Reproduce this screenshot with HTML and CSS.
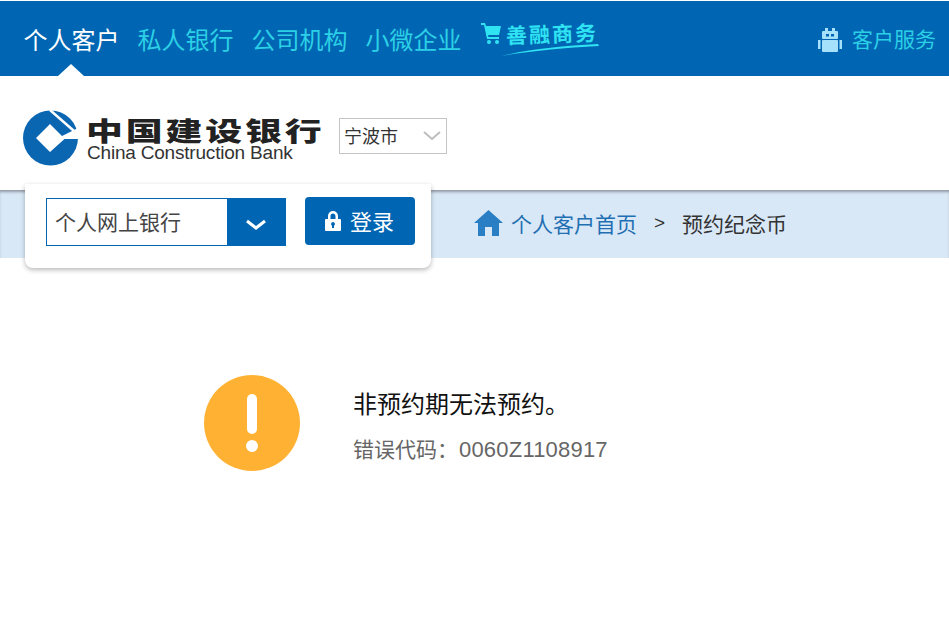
FILE: index.html
```html
<!DOCTYPE html>
<html lang="zh-CN">
<head>
<meta charset="utf-8">
<title>预约纪念币</title>
<link rel="stylesheet" href="styles.css">
</head>
<body>
<nav class="topnav">
  <a class="nav-item active">个人客户</a>
  <a class="nav-item">私人银行</a>
  <a class="nav-item">公司机构</a>
  <a class="nav-item">小微企业</a>
  <a class="shan">
    <svg class="cart" width="21" height="24" viewBox="0 0 21 24"><path d="M0 1h4l1 3h15l-2 9H7l.5 2H18v2H6L3 3H0z" fill="#2fe3f2"/><circle cx="8" cy="20" r="2" fill="#2fe3f2"/><circle cx="16" cy="20" r="2" fill="#2fe3f2"/></svg>
    <span class="shan-text">善融商务</span>
    <svg class="swoosh" width="98" height="14" viewBox="0 0 98 14"><path d="M0 13C30 6 60 3 97 1l1 2C60 5 30 8 0 13z" fill="#2fe3f2"/></svg>
  </a>
  <a class="service">
    <svg width="24" height="25" viewBox="0 0 24 25"><rect x="7" y="0" width="3" height="3" fill="#a6e1fb"/><rect x="14" y="0" width="3" height="3" fill="#a6e1fb"/><rect x="4" y="3" width="16" height="8" rx="1" fill="#a6e1fb"/><rect x="8" y="6" width="3" height="2.500" fill="#0066b3"/><rect x="13" y="6" width="3" height="2.500" fill="#0066b3"/><rect x="4" y="12" width="16" height="12" rx="1" fill="#a6e1fb"/><rect x="0" y="12" width="2.500" height="9" fill="#a6e1fb"/><rect x="21.500" y="12" width="2.500" height="9" fill="#a6e1fb"/></svg>
    <span>客户服务</span>
  </a>
</nav>

<header class="brand">
  <svg class="emblem" width="70" height="65" viewBox="15 105 70 65">
    <circle cx="50.500" cy="138" r="27.500" fill="#0b66b2"/>
    <path d="M50 124L62 136 74 130 82 126V139H64.500L50 152 36 138z" fill="#fff"/>
    <path d="M50 110L74 131" fill="none" stroke="#fff" stroke-width="2.500"/>
  </svg>
  <div class="wordmark">
    <div class="wm-cn">中国建设银行</div>
    <div class="wm-en">China Construction Bank</div>
  </div>
  <div class="city">
    <span>宁波市</span>
    <svg width="18" height="10" viewBox="0 0 18 10"><path d="M1 1l8 7 8-7" fill="none" stroke="#bdbdbd" stroke-width="2"/></svg>
  </div>
</header>

<section class="crumbs">
  <svg width="29" height="26" viewBox="0 0 29 26"><path d="M14.500 0L29 13h-4v13h-7v-9h-7v9H4V13H0z" fill="#2a7fc4"/></svg>
  <a class="crumb-link">个人客户首页</a>
  <span class="crumb-sep">&gt;</span>
  <span class="crumb-cur">预约纪念币</span>
</section>

<aside class="login">
  <div class="login-select">
    <span class="login-value">个人网上银行</span>
    <span class="login-arrow"><svg width="22" height="12" viewBox="0 0 22 12"><path d="M2 2l9 7 9-7" fill="none" stroke="#fff" stroke-width="3"/></svg></span>
  </div>
  <button class="login-btn">
    <svg width="18" height="21" viewBox="0 0 18 21"><path d="M4 9V6a5 5 0 0 1 10 0v3h-2.500V6a2.500 2.500 0 0 0-5 0v3z" fill="#fff"/><path fill-rule="evenodd" d="M2 9h14a1 1 0 0 1 1 1v10a1 1 0 0 1-1 1H2a1 1 0 0 1-1-1V10a1 1 0 0 1 1-1zm7 3a2 2 0 0 0-1 3.700V18h2v-2.300A2 2 0 0 0 9 12z" fill="#fff"/></svg>
    <span>登录</span>
  </button>
</aside>

<main class="message">
  <svg class="alert" width="96" height="96" viewBox="0 0 96 96"><circle cx="48" cy="48" r="48" fill="#ffb133"/><rect x="43" y="19" width="10" height="40" rx="5" fill="#fff"/><circle cx="48" cy="71" r="6" fill="#fff"/></svg>
  <div class="msg-text">
    <h1 class="msg-title">非预约期无法预约。</h1>
    <p class="msg-code">错误代码：<span class="msg-num">0060Z1108917</span></p>
  </div>
</main>
</body>
</html>
```

FILE: styles.css
```css
* { box-sizing: border-box; }
html, body { margin: 0; height: 100%; overflow: hidden; }
body {
  position: relative;
  padding-top: 1px;
  background: #fff;
  font-family: "Noto Sans CJK SC", "Liberation Sans", sans-serif;
  font-weight: 400;
}
.topnav {
  display: flex;
  align-items: flex-start;
  gap: 18px;
  height: 75px;
  padding: 0 13px 0 23.5px;
  background: #0066b3;
}
.nav-item {
  position: relative;
  height: 75px;
  padding-top: 21px;
  font-size: 24px;
  line-height: 34px;
  color: #2cd0e6;
}
.nav-item.active { color: #fff; }
.nav-item.active::after {
  content: "";
  position: absolute;
  left: 34.500px;
  bottom: 0;
  border: 13px solid transparent;
  border-top: 0;
  border-bottom: 12px solid #fff;
}
.shan {
  position: relative;
  display: flex;
  align-items: flex-start;
  gap: 4px;
  width: 118px;
  padding-top: 21px;
  margin-left: 1px;
  color: #2fe3f2;
}
.cart { flex: none; }
.shan-text {
  margin-top: -2px;
  font-size: 21px;
  line-height: 26px;
  font-weight: 700;
  letter-spacing: 2px;
  white-space: nowrap;
  transform: rotate(-2deg);
}
.swoosh { position: absolute; left: 20px; top: 42px; }
.service {
  display: flex;
  align-items: flex-start;
  gap: 10px;
  margin-left: auto;
  padding-top: 27px;
  font-size: 21px;
  line-height: 24px;
  color: #2cd0e6;
}
.service span { margin-top: -2px; }
.brand {
  display: flex;
  align-items: flex-start;
  height: 114px;
  padding: 29px 0 0 15px;
}
.emblem { flex: none; }
.wordmark { margin-left: 2px; width: 252px; padding-top: 12px; }
.wm-cn {
  margin-left: -1px;
  font-size: 26px;
  line-height: 26px;
  font-weight: 900;
  letter-spacing: 2px;
  color: #222;
  white-space: nowrap;
  transform: scaleX(1.42);
  transform-origin: left center;
}
.wm-en {
  font-family: "Liberation Sans", sans-serif;
  font-size: 19px;
  line-height: 20px;
  letter-spacing: -.2px;
  color: #333;
  white-space: nowrap;
}
.city {
  display: flex;
  flex: none;
  align-items: center;
  justify-content: space-between;
  width: 108px;
  height: 36px;
  margin-top: 13px;
  padding: 0 5px 0 4px;
  border: 1px solid #c4c4c4;
  font-size: 18px;
  color: #333;
}
.city span { margin-top: -2px; }
.crumbs {
  display: flex;
  align-items: center;
  height: 68px;
  padding: 0 0 2px 474px;
  background: #d9e8f7;
  box-shadow: inset 0 3px 3px -1px #8f98a3;
  font-size: 21px;
  line-height: 30px;
}
.crumb-link { margin-left: 8px; color: #1f6fb2; }
.crumb-sep { margin: 0 17px; color: #333; font-family: "Liberation Sans", sans-serif; font-size: 19px; }
.crumb-cur { color: #333; }
.login {
  position: absolute;
  left: 25px;
  top: 184px;
  display: flex;
  align-items: flex-start;
  gap: 19px;
  width: 406px;
  height: 84px;
  padding: 14px 0 0 21px;
  background: #fff;
  border-radius: 0 0 8px 8px;
  box-shadow: 0 2px 5px rgba(0, 0, 0, .28);
}
.login-select {
  display: flex;
  width: 240px;
  height: 48px;
  border: 1px solid #0066b3;
  background: #fff;
}
.login-value {
  flex: 1;
  padding-left: 8px;
  font-size: 21px;
  line-height: 44px;
  color: #444;
}
.login-arrow {
  display: flex;
  align-items: center;
  justify-content: center;
  width: 58px;
  padding-top: 6px;
  background: #0066b3;
}
.login-btn {
  display: flex;
  align-items: center;
  gap: 8px;
  width: 110px;
  height: 48px;
  margin-top: -1px;
  padding: 0 0 2px 19px;
  border: 0;
  border-radius: 4px;
  background: #0066b3;
  color: #fff;
  font: inherit;
  font-size: 22px;
}
.message {
  display: flex;
  align-items: flex-start;
  gap: 53px;
  margin-top: 117px;
  padding-left: 204px;
}
.alert { flex: none; }
.msg-text { padding-top: 11px; }
.msg-title {
  margin: 0;
  font-size: 24px;
  line-height: 34px;
  font-weight: 400;
  color: #111;
}
.msg-code {
  margin: 13px 0 0;
  font-size: 21px;
  line-height: 30px;
  color: #666;
}
.msg-num { font-family: "Liberation Sans", sans-serif; font-size: 22px; letter-spacing: .2px; margin-left: 1px; }
```
